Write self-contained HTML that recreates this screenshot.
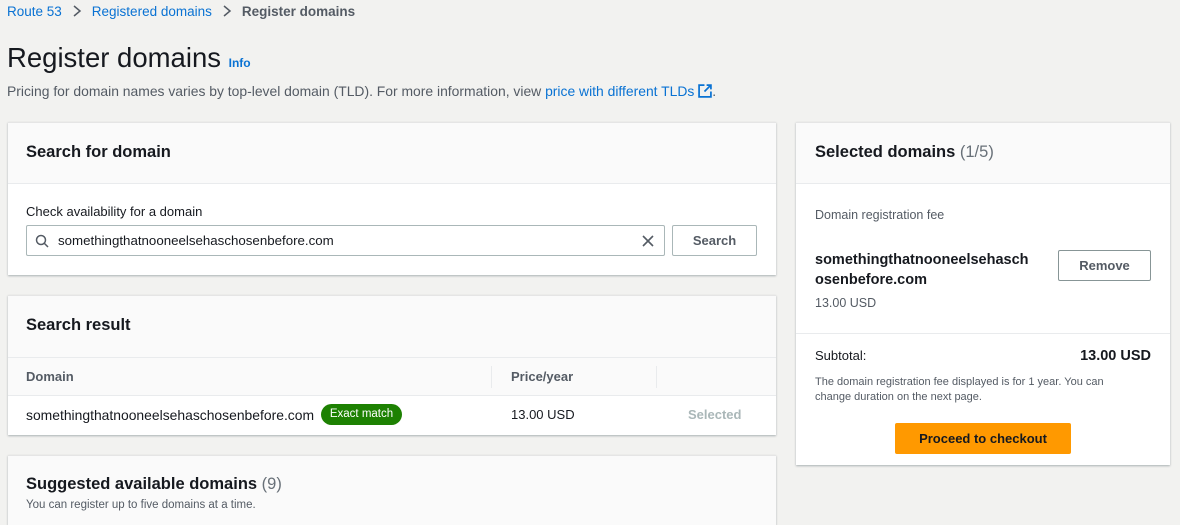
<!DOCTYPE html>
<html><head><meta charset="utf-8"><style>
*{margin:0;padding:0;box-sizing:border-box}
body{width:1180px;height:516px;overflow:hidden;background:#f2f2f0;font-family:"Liberation Sans",sans-serif;color:#16191f;position:relative}
.a{position:absolute;white-space:nowrap}
.card{position:absolute;background:#fff;box-shadow:0 1px 2px rgba(0,28,36,.3);border-top:1px solid #e5e5e5}
.hd{position:absolute;left:0;right:0;top:0;background:#fafafa;border-bottom:1px solid #e9ebed}
.lk{color:#0972d3}
.b{font-weight:bold}
</style></head><body>
<div class="a" style="left:7px;top:4px;font-size:13.5px"><span class="lk">Route 53</span><svg width="30" height="14" viewBox="0 0 30 14" style="vertical-align:-2px"><path d="M12 2l6 5-6 5" fill="none" stroke="#545b64" stroke-width="1.5"/></svg><span class="lk">Registered domains</span><svg width="30" height="14" viewBox="0 0 30 14" style="vertical-align:-2px"><path d="M12 2l6 5-6 5" fill="none" stroke="#545b64" stroke-width="1.5"/></svg><span style="color:#545b64;font-weight:bold">Register domains</span></div>
<div class="a" style="left:7px;top:42px;font-size:27.5px">Register domains <span class="lk b" style="font-size:12px">Info</span></div>
<div class="a" style="left:7px;top:83px;font-size:13.9px;color:#545b64">Pricing for domain names varies by top-level domain (TLD). For more information, view <span class="lk">price with different TLDs</span> <svg width="14" height="14" viewBox="0 0 13 13" style="vertical-align:-2px"><path d="M6 1H1v11h11V7M8 1h4v4M12 1 6 7" fill="none" stroke="#0972d3" stroke-width="1.6"/></svg>.</div>

<div class="card" style="left:8px;top:122px;width:768px;height:153px">
 <div class="hd" style="height:61px"></div>
 <div class="a b" style="left:18px;top:20px;font-size:16.5px">Search for domain</div>
 <div class="a" style="left:18px;top:81px;font-size:13px">Check availability for a domain</div>
 <div class="a" style="left:18px;top:102px;width:639px;height:31px;border:1px solid #aab7b8;border-radius:2px"></div>
 <svg class="a" style="left:27px;top:111px" width="14" height="14" viewBox="0 0 14 14"><circle cx="6" cy="6" r="4.5" fill="none" stroke="#545b64" stroke-width="1.5"/><path d="M9.5 9.5 13 13" stroke="#545b64" stroke-width="1.5"/></svg>
 <div class="a" style="left:50px;top:110px;font-size:13.3px">somethingthatnooneelsehaschosenbefore.com</div>
 <svg class="a" style="left:634px;top:112px" width="12" height="12" viewBox="0 0 12 12"><path d="M1 1l10 10M11 1 1 11" stroke="#545b64" stroke-width="1.6"/></svg>
 <div class="a b" style="left:664px;top:102px;width:85px;height:31px;border:1px solid #aab7b8;border-radius:2px;font-size:13px;color:#545b64;text-align:center;line-height:29px">Search</div>
</div>

<div class="card" style="left:8px;top:295px;width:768px;height:140px">
 <div class="hd" style="height:99px;border-bottom:none"></div>
 <div class="a b" style="left:18px;top:20px;font-size:16.5px">Search result</div>
 <div class="a" style="left:0;right:0;top:61px;border-top:1px solid #e9ebed"></div>
 <div class="a" style="left:483px;top:70px;height:22px;border-left:1px solid #e9ebed"></div>
 <div class="a" style="left:648px;top:70px;height:22px;border-left:1px solid #e9ebed"></div>
 <div class="a b" style="left:18px;top:73px;font-size:13px;color:#545b64">Domain</div>
 <div class="a b" style="left:503px;top:73px;font-size:13px;color:#545b64">Price/year</div>
 <div class="a" style="left:0;right:0;top:99px;border-top:1px solid #e9ebed"></div>
 <div class="a" style="left:18px;top:111px;font-size:13.9px">somethingthatnooneelsehaschosenbefore.com</div>
 <div class="a" style="left:313px;top:108px;width:81px;height:21px;background:#1d8102;border-radius:11px;color:#fff;font-size:11.5px;text-align:center;line-height:21px">Exact match</div>
 <div class="a" style="left:503px;top:111px;font-size:13px">13.00 USD</div>
 <div class="a b" style="left:680px;top:111px;font-size:13px;color:#aab7b8">Selected</div>
</div>

<div class="card" style="left:8px;top:455px;width:768px;height:70px;background:#fafafa">
 <div class="a b" style="left:18px;top:19px;font-size:16.5px">Suggested available domains <span style="font-weight:normal;color:#687078">(9)</span></div>
 <div class="a" style="left:18px;top:43px;font-size:11.5px;color:#545b64">You can register up to five domains at a time.</div>
</div>

<div class="card" style="left:796px;top:122px;width:374px;height:343px">
 <div class="hd" style="height:61px"></div>
 <div class="a b" style="left:19px;top:20px;font-size:16.5px">Selected domains <span style="font-weight:normal;color:#687078">(1/5)</span></div>
 <div class="a" style="left:19px;top:85px;font-size:12.5px;color:#545b64">Domain registration fee</div>
 <div class="a b" style="left:19px;top:127px;font-size:14.5px;line-height:20px">somethingthatnooneelsehasch<br>osenbefore.com</div>
 <div class="a" style="left:19px;top:173px;font-size:12.5px;color:#545b64">13.00 USD</div>
 <div class="a b" style="left:262px;top:127px;width:93px;height:31px;border:1px solid #879596;border-radius:2px;font-size:13px;color:#545b64;text-align:center;line-height:29px">Remove</div>
 <div class="a" style="left:0;right:0;top:210px;border-top:1px solid #e9ebed"></div>
 <div class="a" style="left:19px;top:225px;font-size:13px">Subtotal:</div>
 <div class="a b" style="right:19px;top:225px;font-size:14.5px">13.00 USD</div>
 <div class="a" style="left:19px;top:252px;font-size:11px;line-height:15px;color:#545b64">The domain registration fee displayed is for 1 year. You can<br>change duration on the next page.</div>
 <div class="a b" style="left:99px;top:300px;width:176px;height:31px;background:#ff9900;border-radius:2px;font-size:13px;text-align:center;line-height:31px">Proceed to checkout</div>
</div>
</body></html>
